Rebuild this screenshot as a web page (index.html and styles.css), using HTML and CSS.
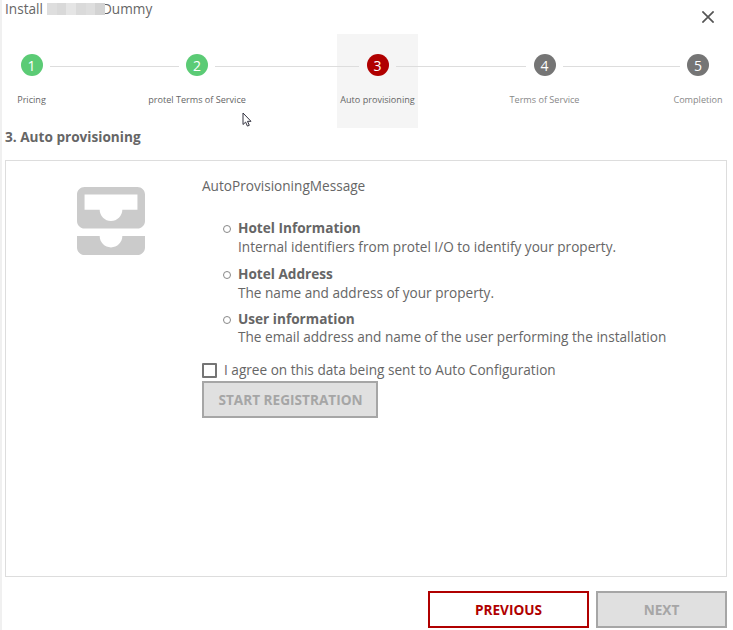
FILE: index.html
```
<!DOCTYPE html>
<html lang="en">
<head>
<meta charset="utf-8">
<title>Install</title>
<link rel="stylesheet" href="styles.css">
</head>
<body>
<main class="dialog">
  <header class="header">
    <div class="title"><span class="t-install">Install</span><span class="redacted"><i class="r1"></i><i class="r2"></i><i class="r3"></i><i class="r4"></i><i class="r5"></i><i class="r6"></i></span><span class="t-name">Dummy</span></div>
    <svg class="close" viewBox="0 0 12 12"><path d="M.4.4l11.2 11.2M11.6.4L.4 11.6" fill="none" stroke="#555" stroke-width="1.7"/></svg>
  </header>
  <nav class="stepper">
    <div class="step done"><span class="dot">1</span><span class="label">Pricing</span></div>
    <div class="line"></div>
    <div class="step done"><span class="dot">2</span><span class="label">protel Terms of Service</span></div>
    <div class="line"></div>
    <div class="step active"><span class="dot">3</span><span class="label">Auto provisioning</span></div>
    <div class="line"></div>
    <div class="step"><span class="dot">4</span><span class="label">Terms of Service</span></div>
    <div class="line"></div>
    <div class="step"><span class="dot">5</span><span class="label">Completion</span></div>
  </nav>
  <h1 class="heading">3. Auto provisioning</h1>
  <section class="panel">
    <svg class="inbox" viewBox="3 3 18 18"><path fill="#cbcbcb" d="M19 3H5c-1.1 0-2 .9-2 2v7c0 1.1.9 2 2 2h14c1.1 0 2-.9 2-2V5c0-1.1-.9-2-2-2zm0 6h-4c0 1.62-1.38 3-3 3s-3-1.38-3-3H5V5h14v4zm-4 7h6v3c0 1.1-.9 2-2 2H5c-1.1 0-2-.9-2-2v-3h6c0 1.66 1.34 3 3 3s3-1.34 3-3z"/></svg>
    <div class="content">
      <p class="message">AutoProvisioningMessage</p>
      <ul class="list">
        <li><b>Hotel Information</b><span>Internal identifiers from protel I/O to identify your property.</span></li>
        <li><b>Hotel Address</b><span>The name and address of your property.</span></li>
        <li><b>User information</b><span>The email address and name of the user performing the installation</span></li>
      </ul>
      <label class="agree"><i class="box"></i><span>I agree on this data being sent to Auto Configuration</span></label>
      <button class="btn disabled start" disabled>START REGISTRATION</button>
    </div>
  </section>
  <footer class="footer">
    <button class="btn previous">PREVIOUS</button>
    <button class="btn disabled next" disabled>NEXT</button>
  </footer>
</main>
<svg class="cursor" viewBox="0 0 10 15"><path d="M1 1v11.5l2.6-2.4 1.8 4 1.9-.8-1.8-4H9z" fill="#fff" stroke="#333340" stroke-width="1"/></svg>
</body>
</html>
```
FILE: styles.css
```
* { box-sizing: border-box; }
body {
  margin: 0;
  width: 733px;
  height: 630px;
  overflow: hidden;
  background: #fff;
  color: #666;
  font: 13.62px/18px "Open Sans", sans-serif;
}
.dialog {
  height: 630px;
  border-left: 2px solid #f0f0f0;
  padding: 0 6px 2px 3px;
  display: flex;
  flex-direction: column;
}
.header {
  height: 34px;
  display: flex;
  justify-content: space-between;
}
.title { display: flex; height: 18px; }
.t-install { width: 42px; }
.t-name { margin-left: -3px; }
.redacted { display: flex; width: 58px; height: 12px; margin-top: 3px; position: relative; }
.redacted i { flex: 1; background: #dedede; }
.redacted .r2 { background: #d9d9d9; }
.redacted .r3 { background: #e5e5e5; }
.redacted .r4 { background: #dadada; }
.redacted .r6 { background: #d3d3d3; }
.close { width: 12px; height: 12px; margin: 11px 13px 0 0; }
.stepper {
  height: 94px;
  padding-left: 8px;
  display: grid;
  grid-template-columns: 37px 129px 36px 144px 37px 130px 37px 117px 36px;
}
.line { height: 1px; margin-top: 32px; background: #ddd; position: relative; }
.step {
  display: flex;
  flex-direction: column;
  align-items: center;
  height: 94px;
  padding-top: 20px;
}
.dot {
  width: 22px;
  height: 22px;
  border-radius: 50%;
  background: #757575;
  color: #fff;
  text-align: center;
  font-size: 14px;
  line-height: 23px;
}
.done .dot { background: #5bcb75; }
.active { background: #f5f5f5; margin: 0 -22px; }
.active .dot { background: #b00000; }
.label {
  margin-top: 17px;
  font-size: 9.1px;
  line-height: 13px;
  white-space: nowrap;
  color: #888;
}
.done .label, .active .label { color: #666; }
.heading {
  margin: 0;
  height: 32px;
  font-size: 13.62px;
  line-height: 18px;
}
.panel {
  height: 417px;
  border: 1px solid #ddd;
  display: flex;
}
.heading, .footer { flex: none; }
.inbox { width: 68px; height: 68px; margin: 26px 57px 0 71px; }
.content { padding-top: 16px; white-space: nowrap; }
.message { margin: 0 0 24px; }
.list { margin: 0; padding: 0 0 0 36px; list-style: none; }
.list li { margin-bottom: 9px; position: relative; }
.list li:first-child { margin-bottom: 10px; }
.list li::before {
  content: "";
  position: absolute;
  left: -15px;
  top: 6px;
  width: 6px;
  height: 6px;
  border: 1px solid #888;
  border-radius: 50%;
}
.list b { display: block; height: 18px; }
.list span { display: block; height: 18px; line-height: 19px; }
.list li:last-child span { line-height: 18px; }
.agree { display: flex; height: 20px; margin-top: 15px; }
.box { width: 15px; height: 15px; margin: 2px 7px 0 0; border: 2px solid #757575; border-radius: 1px; }
.btn {
  font: 700 13.62px/18px "Open Sans", sans-serif;
  padding: 0;
  height: 37px;
  border: 2px solid #a6a6a6;
  background: #e0e0e0;
  color: #a6a6a6;
  white-space: nowrap;
}
.start { width: 176px; padding-left: 1px; }
.footer { display: flex; justify-content: flex-end; gap: 7px; margin-top: 14px; }
.btn.previous { width: 161px; background: #fff; border-color: #b00000; color: #b00000; }
.next { width: 131px; }
.cursor { position: absolute; left: 242px; top: 112px; width: 10px; height: 15px; }
```
